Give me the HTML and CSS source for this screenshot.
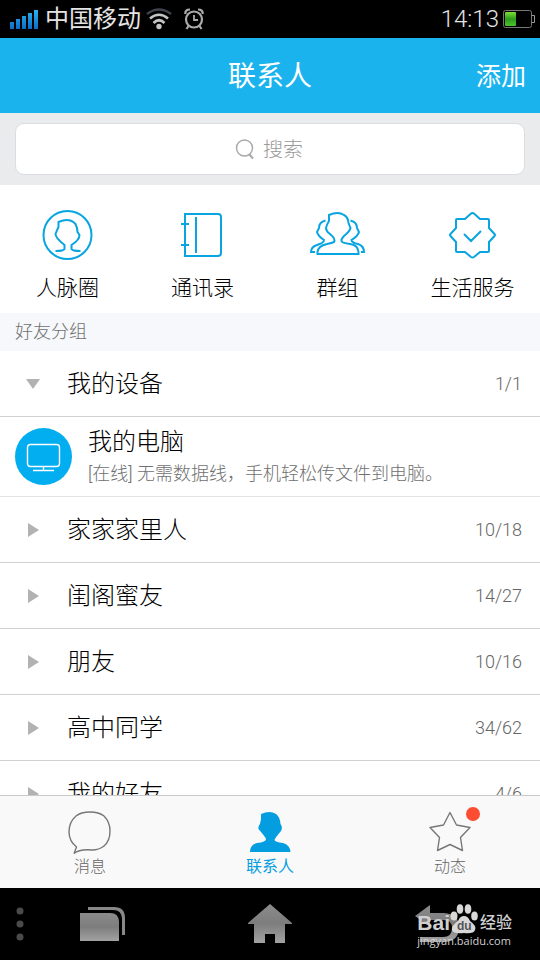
FILE: index.html
```html
<!DOCTYPE html>
<html lang="zh-CN">
<head>
<meta charset="utf-8">
<meta name="viewport" content="width=device-width, initial-scale=1">
<title>联系人</title>
<link rel="stylesheet" href="styles.css">
</head>
<body>
<div class="status">
  <svg class="signal" width="28" height="20" viewBox="0 0 28 20" aria-hidden="true">
    <defs><linearGradient id="sig" x1="0" y1="0" x2="0" y2="20" gradientUnits="userSpaceOnUse"><stop offset="0" stop-color="#2cb4f5"/><stop offset="1" stop-color="#0a6fc8"/></linearGradient></defs>
    <path fill="url(#sig)" d="M0 13h4v7H0zM6 10h4v10H6zM12 7h4v13h-4zM18 4h4v16h-4zM24 1h4v19h-4z"/>
  </svg>
  <span class="carrier">中国移动</span>
  <svg class="wifi" width="26" height="22" viewBox="0 0 26 22" fill="none" stroke-width="2.600" aria-hidden="true">
    <path stroke="#40434c" d="M1 6Q13 -3 25 6"/>
    <path stroke="#c4c4c4" d="M4 10.500Q13 3 22 10.500M7.500 15Q13 9.500 18.500 15"/>
    <circle cx="13" cy="18.500" r="2.700" fill="#c4c4c4"/>
  </svg>
  <svg class="alarm" width="20" height="22" viewBox="0 0 20 22" fill="none" stroke="#aaa" stroke-width="2.200" aria-hidden="true">
    <circle cx="10" cy="11.500" r="8"/><path stroke-width="1.800" d="M10 7v5h4"/><path d="M1.300 6Q1 1.500 6 1.500M14 1.500Q19 1.500 18.700 6M4.500 18l-2 3M15.500 18l2 3"/>
  </svg>
  <time class="clock">14:13</time>
  <svg width="32" height="18" viewBox="0 0 32 18" aria-hidden="true">
    <defs><linearGradient id="bat" x1="0" y1="0" x2="0" y2="1"><stop offset="0" stop-color="#7fe034"/><stop offset=".5" stop-color="#2c9a1c"/><stop offset="1" stop-color="#4cc42c"/></linearGradient></defs>
    <rect x=".5" y=".5" width="28" height="17" rx="2" fill="none" stroke="#777"/><path fill="none" stroke="#999" d="M28.500 5.500h3v7h-3"/>
    <rect x="2" y="2" width="11" height="14" rx="1" fill="url(#bat)"/>
  </svg>
</div>

<header class="header">
  <h1 class="title">联系人</h1>
  <button class="add" type="button">添加</button>
</header>

<form class="search">
  <div class="field">
    <svg width="20" height="21" viewBox="0 0 20 21" fill="none" stroke="#aaa" stroke-width="1.500" aria-hidden="true"><circle cx="9.500" cy="9" r="8"/><path stroke-width="2.200" d="M14 15l4 4.500"/></svg>
    <input class="query" type="text" placeholder="搜索" aria-label="搜索">
  </div>
</form>

<nav class="shortcuts">
  <a class="shortcut" href="#circle">
    <svg width="56" height="52" viewBox="0 0 56 52" aria-hidden="true"><circle cx="27.500" cy="26" r="24"/><path d="M15.500 42Q23.500 42 24.500 40V36Q15.500 29 15.500 25Q17.500 20 18.500 18V13Q29.500 8 35.500 15Q37.500 19 37.500 23L39.500 26Q39.500 31 31.500 36V40Q32.500 42 40.500 42"/></svg>
    <span>人脉圈</span>
  </a>
  <a class="shortcut" href="#book">
    <svg width="56" height="52" viewBox="0 0 56 52" aria-hidden="true"><path d="M10 5H43Q46 5 46 8V44Q46 47 43 47H10ZM21 8V44M6 15h8M6 36h8"/></svg>
    <span>通讯录</span>
  </a>
  <a class="shortcut" href="#groups">
    <svg width="56" height="52" viewBox="0 0 56 52" aria-hidden="true"><path d="M7.500 45H48.500V43Q48 36 40 35Q32 34 31.500 32Q31 30 34 27Q40 22 40.500 19L38.500 14Q38 8 34 6Q28 2 19 6V12Q17 15 16 19Q16 22 20 25Q26 30 24 33Q22 34 17 35Q8 37 7.500 43ZM15.500 11.500Q9 13 9 19L7 23Q8 27 14 31Q14 34 7 36Q1 38 1 43H5M40.500 11.500Q47 13 47 19L49 23Q48 27 41.500 31Q42 34 48 35Q54 37 54 43H51"/></svg>
    <span>群组</span>
  </a>
  <a class="shortcut" href="#life">
    <svg width="56" height="52" viewBox="0 0 56 52" aria-hidden="true"><path d="M27.500 4Q28.500 4 29.500 5L35 10H43Q44 10 44 11V19L49.500 25Q50.500 26 49.500 27L44 33V42Q44 43 43 43H35L29 48Q27.500 49 26 48L20 43H12Q11 43 11 42V33L5.500 27Q4.500 26 5.500 25L11 19V11Q11 10 12 10H20L25.500 5Q26.500 4 27.500 4ZM19 25L26 32L36 22"/></svg>
    <span>生活服务</span>
  </a>
</nav>

<h2 class="section">好友分组</h2>

<main class="list">
  <button class="group" type="button" aria-expanded="true"><i class="arrow open"></i><span class="label">我的设备</span><span class="count">1/1</span></button>
  <a class="device" href="#computer">
    <svg width="57" height="57" viewBox="0 0 57 57" fill="none" stroke="#fff" stroke-width="1.400" aria-hidden="true"><circle cx="28.500" cy="28.500" r="28.500" fill="#02aef0" stroke="none"/><rect x="12.500" y="16.500" width="32" height="22" rx="3"/><path d="M28.500 39v3M18 42.500h21"/></svg>
    <span class="info"><span class="name">我的电脑</span><span class="desc">[在线] 无需数据线，手机轻松传文件到电脑。</span></span>
  </a>
  <button class="group" type="button" aria-expanded="false"><i class="arrow"></i><span class="label">家家家里人</span><span class="count">10/18</span></button>
  <button class="group" type="button" aria-expanded="false"><i class="arrow"></i><span class="label">闺阁蜜友</span><span class="count">14/27</span></button>
  <button class="group" type="button" aria-expanded="false"><i class="arrow"></i><span class="label">朋友</span><span class="count">10/16</span></button>
  <button class="group" type="button" aria-expanded="false"><i class="arrow"></i><span class="label">高中同学</span><span class="count">34/62</span></button>
  <button class="group" type="button" aria-expanded="false"><i class="arrow"></i><span class="label">我的好友</span><span class="count">4/6</span></button>
</main>

<nav class="tabs">
  <a class="tab" href="#messages">
    <svg width="46" height="44" viewBox="0 0 46 44" fill="none" stroke="#777" stroke-width="1.400" aria-hidden="true"><path d="M7 42.500L9.500 36Q2 30 2 21Q2 11 9 5Q14 1 23 1Q32 1 37 5Q43 11 43 20Q43 30 37 35Q32 39 25 39Q12 38 7 42.500Z"/></svg>
    <span>消息</span>
  </a>
  <a class="tab active" href="#contacts" aria-current="page">
    <svg width="46" height="44" viewBox="0 0 46 44" fill="#049ee0" aria-hidden="true"><path d="M3 41Q3 34 10 32Q19 31 19 28Q19 27 14 21L11.500 18Q11 15 13 13L14 8V3Q23-1 29 3Q33 6 33.500 13Q36 16 34 20Q28 27 27.500 29Q28 31 36 32Q43 34 43.500 41Z"/></svg>
    <span>联系人</span>
  </a>
  <a class="tab" href="#news">
    <svg width="46" height="44" viewBox="0 0 46 44" fill="none" stroke="#777" stroke-width="1.400" stroke-linejoin="round" aria-hidden="true"><path d="M23 1.500L29.500 14L43 16.500L33.500 26.500L35.500 39.500L23 33.500L10.500 39.500L12.500 26.500L3 16.500L16.500 14Z"/></svg>
    <i class="dot"></i>
    <span>动态</span>
  </a>
</nav>

<footer class="keys">
  <svg class="more" width="8" height="34" viewBox="0 0 8 34" fill="#4a4a4a" aria-hidden="true"><circle cx="4" cy="4" r="3.500"/><circle cx="4" cy="17" r="3.500"/><circle cx="4" cy="30" r="3.500"/></svg>
  <button class="key" type="button" aria-label="最近任务">
    <svg width="46" height="36" viewBox="0 0 46 36" aria-hidden="true"><defs><linearGradient id="key" x1="0" y1="0" x2="0" y2="1"><stop offset="0" stop-color="#8b8b8b"/><stop offset=".5" stop-color="#7d7d7d"/><stop offset="1" stop-color="#a2a2a2"/></linearGradient></defs><path fill="url(#key)" d="M0 7H30Q39 7 39 16V35H0Z"/><path fill="#888" d="M8 1H34Q45 1 45 12V29H42V13Q42 4 33 4H8Z"/></svg>
  </button>
  <button class="key" type="button" aria-label="主页">
    <svg width="46" height="40" viewBox="0 0 46 40" aria-hidden="true"><path fill="url(#key)" d="M23 0L45 19V20H38V39H28V30H18V39H7V20H1V19Z"/></svg>
  </button>
  <button class="key" type="button" aria-label="返回">
    <svg width="46" height="40" viewBox="0 0 46 40" aria-hidden="true"><path fill="url(#key)" d="M1 12L16 1V9H30Q45 10 45 23Q45 38 29 38H6V33H29Q38 33 38 24Q38 16 29 16H16V23Z"/></svg>
  </button>
  <div class="mark">
    <div class="brand"><span>Bai</span><svg width="28" height="30" viewBox="0 0 28 30" aria-hidden="true"><g fill="#d8d8d8"><ellipse cx="4" cy="12" rx="3.500" ry="4.500"/><ellipse cx="10" cy="5" rx="3.300" ry="4.800"/><ellipse cx="18" cy="5" rx="3.300" ry="4.800"/><ellipse cx="24.500" cy="12" rx="3.300" ry="4.500"/><path d="M14 12Q18 12 20 17Q27 22 25 26Q24 30 14 29Q3 30 2 26Q1 22 8 17Q10 12 14 12Z"/></g><text class="du" x="7" y="26">du</text></svg><span class="cn">经验</span></div>
    <div class="site">jingyan.baidu.com</div>
  </div>
</footer>
</body>
</html>
```

FILE: styles.css
```css
* { box-sizing: border-box; }
body {
  margin: 0;
  height: 100vh;
  display: flex;
  flex-direction: column;
  background: #fff;
  color: #000;
  font-family: Roboto, "Noto Sans CJK SC", sans-serif;
  font-weight: 300;
}
a { color: inherit; text-decoration: none; }
button { border: 0; padding: 0; background: none; color: inherit; font: inherit; cursor: pointer; }
svg { display: block; flex: none; }

.status {
  flex: none;
  height: 38px;
  padding: 0 5px 0 10px;
  display: flex;
  align-items: center;
  background: #000;
  color: #e4e4e4;
  font-size: 24px;
  line-height: 36px;
}
.carrier { margin-left: 7px; font-weight: 400; }
.wifi { margin-left: 5px; }
.alarm { margin-left: 12px; }
.clock { margin-left: auto; margin-right: 4px; }

.header {
  flex: none;
  height: 75px;
  padding: 0 14px 4px;
  display: grid;
  grid-template-columns: 1fr auto 1fr;
  align-items: center;
  background: #1ab3ee;
  color: #fff;
}
.title { grid-column: 2; margin: 0; font-size: 28px; font-weight: 400; }
.add { justify-self: end; font-size: 25px; font-weight: 400; }

.search { flex: none; padding: 10px 15px; background: #eaebed; }
.field {
  height: 52px;
  display: flex;
  align-items: center;
  justify-content: center;
  gap: 8px;
  border: 1px solid #dcdde0;
  border-radius: 9px;
  background: #fff;
}
.query {
  width: 42px;
  border: 0;
  padding: 2px 0 0;
  outline: 0;
  background: none;
  font: inherit;
  font-size: 20px;
}
.query::placeholder { color: #999; opacity: 1; }

.shortcuts { flex: none; height: 128px; padding-top: 24px; display: flex; }
.shortcut {
  flex: 1;
  display: flex;
  flex-direction: column;
  align-items: center;
  gap: 12px;
  font-size: 21px;
  line-height: 30px;
}
.shortcut svg { fill: none; stroke: #08a5e1; stroke-width: 2; }

.section {
  flex: none;
  margin: 0;
  padding: 0 15px;
  background: #f7f8fb;
  color: #707070;
  font-size: 18px;
  font-weight: 300;
  line-height: 38px;
}

.list { flex: 1; min-height: 0; overflow: hidden; }
.group {
  width: 100%;
  height: 66px;
  padding: 0 18px 0 25px;
  display: flex;
  align-items: center;
  border-bottom: 1px solid #cfd0d3;
  font-size: 24px;
  text-align: left;
}
.label { padding-bottom: 4px; }
.arrow { width: 42px; display: flex; }
.arrow::before {
  content: "";
  margin-left: 3px;
  border: 7px solid transparent;
  border-left: 11px solid #b2b2b2;
  border-right: 0;
}
.arrow.open::before {
  margin-left: 1px;
  border: 7px solid transparent;
  border-top: 10px solid #b2b2b2;
  border-bottom: 0;
}
.count { margin-left: auto; color: #666; font-size: 18px; }
.device {
  height: 80px;
  padding: 0 15px;
  display: flex;
  align-items: center;
  gap: 16px;
  border-bottom: 1px solid #e2e3e5;
}
.info { display: flex; flex-direction: column; }
.name { font-size: 24px; line-height: 34px; }
.desc { color: #707070; font-size: 18px; line-height: 30px; }

.tabs {
  flex: none;
  height: 93px;
  padding-top: 15px;
  display: flex;
  border-top: 1px solid #c8c9cc;
  background: #f9f9f9;
}
.tab {
  position: relative;
  flex: 1;
  display: flex;
  flex-direction: column;
  align-items: center;
  color: #666;
  font-size: 16px;
  line-height: 24px;
}
.active { color: #049ee0; font-weight: 400; }
.dot {
  position: absolute;
  top: -4px;
  left: calc(50% + 16px);
  width: 14px;
  height: 14px;
  border-radius: 50%;
  background: #fc4c32;
}

.keys {
  position: relative;
  flex: none;
  height: 72px;
  display: flex;
  align-items: center;
  background: #000;
}
.more { position: absolute; left: 16px; }
.key { flex: 1; display: flex; justify-content: center; }
.key:nth-of-type(1) { padding-left: 20px; }
.key:nth-of-type(3) { padding-right: 20px; }
.mark {
  position: absolute;
  right: 28px;
  bottom: 12px;
  color: #d0d0d0;
  font-weight: 400;
}
.brand {
  display: flex;
  align-items: flex-end;
  font-family: "Liberation Sans", "Noto Sans CJK SC", sans-serif;
  font-size: 21px;
  font-weight: 700;
  line-height: 22px;
}
.cn { margin-left: 2px; font-size: 16px; font-weight: 500; }
.du { fill: #555; font-size: 12px; }
.site { font-family: "Open Sans", sans-serif; font-size: 11px; line-height: 14px; }
```
